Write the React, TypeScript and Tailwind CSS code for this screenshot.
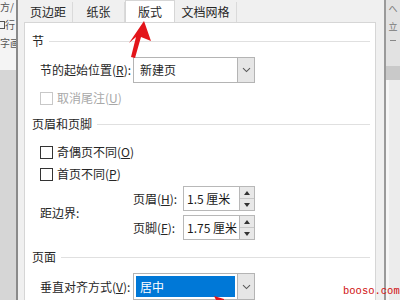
import type { ReactNode } from 'react'

function Chevron() {
  return (
    <svg width="9" height="6" viewBox="0 0 9 6" className="text-[#5a5a5a]">
      <path d="M1 1.2 L4.5 4.6 L8 1.2" fill="none" stroke="currentColor" strokeWidth="1.1" />
    </svg>
  )
}

function SectionHead({ title }: { title: string }) {
  return (
    <div className="flex h-[18px] items-center gap-[5px]">
      <span>{title}</span>
      <div className="h-px flex-1 bg-[#e0e0e0]" />
    </div>
  )
}

function CheckRow({ children, disabled }: { children: ReactNode; disabled?: boolean }) {
  return (
    <div className="flex h-[16px] items-center gap-[4px] pl-[8px]">
      <div
        className={
          disabled
            ? 'h-[13px] w-[13px] border border-[#c8c8c8] bg-white'
            : 'h-[13px] w-[13px] border border-[#333333] bg-white'
        }
      />
      <span className={disabled ? 'text-[#a8a8a8]' : ''}>{children}</span>
    </div>
  )
}

function SpinRow({ label, value }: { label: ReactNode; value: string }) {
  return (
    <div className="flex h-[25px] items-center">
      <span className="w-[50px]">{label}</span>
      <div className="flex h-full w-[57px] items-center border border-[#b8b8b8] bg-white pl-[3px] text-[#1a1a1a]">
        {value}
      </div>
      <div className="flex h-full w-[15px] flex-col border border-l-0 border-[#b8b8b8] bg-[#e8e8e8]">
        <div className="flex flex-1 items-center justify-center border-b border-[#c8c8c8]">
          <svg width="6" height="4" viewBox="0 0 6 4">
            <path d="M0 4 L3 0 L6 4 Z" fill="#333" />
          </svg>
        </div>
        <div className="flex flex-1 items-center justify-center">
          <svg width="6" height="4" viewBox="0 0 6 4">
            <path d="M0 0 L3 4 L6 0 Z" fill="#333" />
          </svg>
        </div>
      </div>
    </div>
  )
}

const tabs = [
  { name: '页边距', w: 'w-[49px]' },
  { name: '纸张', w: 'w-[52px]' },
  { name: '版式', w: 'w-[50px]', active: true },
  { name: '文档网格', w: 'w-[62px]' },
]

export default function App() {
  return (
    <div className="relative flex h-[300px] w-[400px] overflow-hidden bg-[#e6e6e6] font-['Noto_Sans_CJK_SC',sans-serif] text-[12px] text-[#262626]">
      {/* document behind, left */}
      <div className="flex w-[16px] flex-col">
        <div className="flex h-[70px] flex-col gap-[6px] bg-[#f4f4f4] pt-[1px] text-[10px] leading-[12px] text-[#555]">
          <div className="flex justify-between pr-[2px]">
            <span>方</span>
            <span>/</span>
          </div>
          <div className="flex items-center justify-between pr-[1px]">
            <span className="h-[8px] w-[6px] border border-l-0 border-[#555]" />
            <span>行</span>
          </div>
          <div className="flex justify-between pr-[1px]">
            <span>字</span>
            <span>画</span>
          </div>
        </div>
        <div className="flex-1 bg-[#d6d6d6]" />
      </div>
      <div className="w-[2px] bg-[#8a8a8a]" />

      {/* dialog */}
      <div className="flex w-[366px] flex-col bg-[#f0f0f0] pl-[6px] pr-[8px]">
        <div className="flex h-[22px] items-end">
          {tabs.map((t) =>
            t.active ? (
              <div
                key={t.name}
                className={`${t.w} -mb-px flex h-[23px] items-center justify-center border border-b-0 border-[#d6d6d6] bg-white`}
              >
                {t.name}
              </div>
            ) : (
              <div
                key={t.name}
                className={`${t.w} flex h-[20px] items-center justify-center border-r border-[#dadada] bg-[#f0f0f0]`}
              >
                {t.name}
              </div>
            ),
          )}
        </div>
        <div className="flex flex-1 flex-col border border-b-0 border-[#d6d6d6] bg-white pl-[7px] pr-[5px] pt-[9px]">
          <SectionHead title="节" />
          <div className="mt-[7px] flex h-[26px] items-center pl-[8px]">
            <span className="w-[93px]">
              节的起始位置(<span className="underline">R</span>):
            </span>
            <div className="flex h-full w-[122px] border border-[#b4b4b4] bg-white">
              <span className="flex flex-1 items-center pl-[6px]">新建页</span>
              <div className="flex w-[17px] items-center justify-center border-l border-[#b4b4b4] bg-[#e6e6e6]">
                <Chevron />
              </div>
            </div>
          </div>
          <div className="mt-[7px]">
            <CheckRow disabled>
              取消尾注(<span className="underline">U</span>)
            </CheckRow>
          </div>

          <div className="mt-[9px]">
            <SectionHead title="页眉和页脚" />
          </div>
          <div className="mt-[11px]">
            <CheckRow>
              奇偶页不同(<span className="underline">O</span>)
            </CheckRow>
          </div>
          <div className="mt-[6px]">
            <CheckRow>
              首页不同(<span className="underline">P</span>)
            </CheckRow>
          </div>
          <div className="mt-[4px] flex items-center pl-[8px]">
            <span className="w-[93px]">距边界:</span>
            <div className="flex flex-col gap-[4px]">
              <SpinRow
                label={
                  <>
                    页眉(<span className="underline">H</span>):
                  </>
                }
                value="1.5 厘米"
              />
              <SpinRow
                label={
                  <>
                    页脚(<span className="underline">F</span>):
                  </>
                }
                value="1.75 厘米"
              />
            </div>
          </div>

          <div className="mt-[8px]">
            <SectionHead title="页面" />
          </div>
          <div className="mt-[7px] flex h-[27px] items-center pl-[8px]">
            <span className="w-[93px]">
              垂直对齐方式(<span className="underline">V</span>):
            </span>
            <div className="flex h-full w-[122px] border border-[#b4b4b4] bg-white">
              <div className="flex flex-1 p-[2px]">
                <span className="flex flex-1 items-center bg-[#0078d7] pl-[4px] text-white">居中</span>
              </div>
              <div className="flex w-[17px] items-center justify-center border-l border-[#b4b4b4] bg-[#e6e6e6]">
                <Chevron />
              </div>
            </div>
          </div>
        </div>
      </div>

      <div className="w-[2px] bg-[#9a9a9a]" />
      {/* document behind, right */}
      <div className="flex w-[14px] flex-col">
        <div className="flex h-[66px] flex-col items-center gap-[8px] bg-[#e2e2e2] pt-[4px] text-[9px] leading-[10px] text-[#777]">
          <span>へ</span>
          <span>立</span>
          <span className="h-px w-[6px] bg-[#888]" />
        </div>
        <div className="h-[14px] bg-[#c9c9c9]" />
        <div className="flex flex-1 bg-[#ececec]">
          <div className="w-[3px] bg-[#f6f6f6]" />
        </div>
      </div>

      {/* annotations */}
      <svg className="pointer-events-none absolute left-0 top-0" width="400" height="300" viewBox="0 0 400 300">
        <path d="M144 21 L151 41 L141 37 L135 58 L131 57 L136 37 L129 43 Z" fill="#e3151a" />
        <path d="M214 296 L224 299 L224 300 L216 300 Z" fill="#e3151a" />
      </svg>
      <span className="absolute left-[343px] top-[284px] font-['Liberation_Mono',monospace] text-[10.5px] leading-[14px] text-[#d01010]">
        booso.com
      </span>
    </div>
  )
}
